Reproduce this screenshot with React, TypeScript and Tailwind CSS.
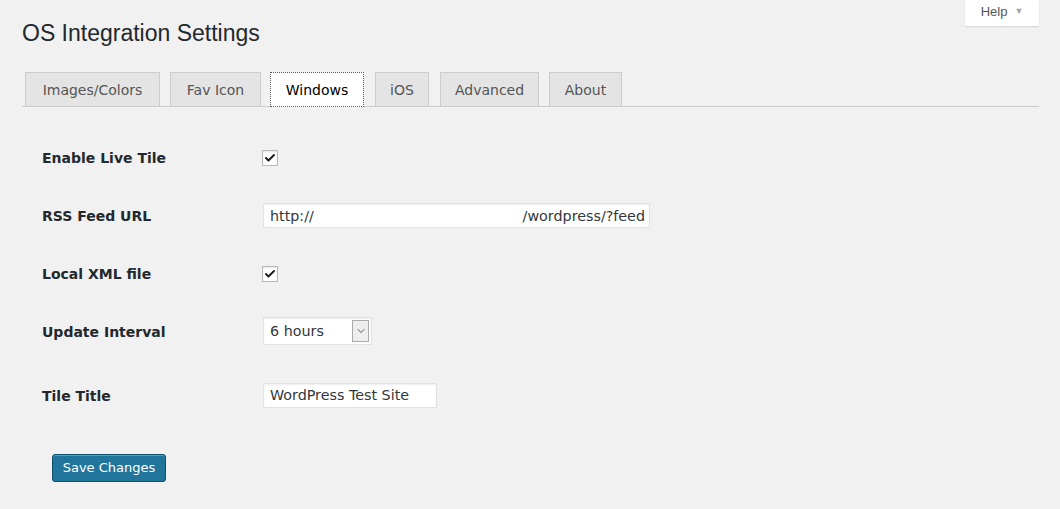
import { Check, ChevronDown } from 'lucide-react';

const tabs = [
  { name: 'Images/Colors', w: 'w-[135px]', ml: 'ml-0' },
  { name: 'Fav Icon', w: 'w-[91px]', ml: 'ml-[10px]' },
  { name: 'Windows', w: 'w-[94px]', ml: 'ml-[9px]' },
  { name: 'iOS', w: 'w-[54px]', ml: 'ml-[11px]' },
  { name: 'Advanced', w: 'w-[99px]', ml: 'ml-[11px]' },
  { name: 'About', w: 'w-[73px]', ml: 'ml-[10px]' },
];

const Checkbox = () => (
  <span className="flex h-4 w-4 items-center justify-center border border-[#b4b9be] bg-white shadow-[inset_0_1px_2px_rgba(0,0,0,0.1)]">
    <Check className="h-3 w-3 text-[#1e1e1e]" strokeWidth={4} />
  </span>
);

export default function App() {
  const row = 'flex items-center';
  const label = 'w-[240px] shrink-0 pl-5 text-[14px] font-bold text-[#23282d]';
  const field =
    'flex items-center bg-white border border-[#e2e2e2] shadow-[inset_0_1px_2px_rgba(0,0,0,0.07)] text-[14.3px] text-[#32373c] px-[6px] pt-[2px]';

  return (
    <div className="relative min-h-[509px] w-[1060px] bg-[#f1f1f1] font-['DejaVu_Sans',Verdana,sans-serif]">
      <div className="absolute right-[21px] top-0 flex h-[26px] w-[74px] items-center justify-center gap-[7px] bg-white pb-[2px] font-['Liberation_Sans',Arial,sans-serif] text-[13px] text-[#555] shadow-[0_1px_1px_rgba(0,0,0,0.1)]">
        <span>Help</span>
        <span className="text-[9px] text-[#a0a5aa]">▼</span>
      </div>

      <div className="pl-[22px] pr-[21px]">
        <h1 className="pt-[19px] font-['Liberation_Sans',Arial,sans-serif] text-[23px] leading-[29px] text-[#23282d]">
          OS Integration Settings
        </h1>

        <div className="mt-[24px] flex border-b border-[#ccc] pl-[3px]">
          {tabs.map((t) =>
            t.name === 'Windows' ? (
              <div
                key={t.name}
                className={`${t.w} ${t.ml} -mb-px flex h-[35px] items-center justify-center border border-dotted border-[#555] bg-white pt-[2px] text-[14px] text-black`}
              >
                {t.name}
              </div>
            ) : (
              <div
                key={t.name}
                className={`${t.w} ${t.ml} flex h-[34px] items-center justify-center border border-b-0 border-[#ccc] bg-[#e4e4e4] pt-[2px] text-[14px] text-[#555]`}
              >
                {t.name}
              </div>
            )
          )}
        </div>

        <div className="mt-[42px] flex flex-col">
          <div className={`${row} h-[18px]`}>
            <div className={label}>Enable Live Tile</div>
            <Checkbox />
          </div>

          <div className={`${row} mt-[40px] h-[18px]`}>
            <div className={label}>RSS Feed URL</div>
            <div className={`${field} -mt-px ml-px h-[25px] w-[387px] justify-between pr-[4px]`}>
              <span>http://</span>
              <span>/wordpress/?feed</span>
            </div>
          </div>

          <div className={`${row} mt-[40px] h-[18px]`}>
            <div className={label}>Local XML file</div>
            <Checkbox />
          </div>

          <div className={`${row} mt-[40px] h-[18px]`}>
            <div className={label}>Update Interval</div>
            <div className={`${field} -mt-[2px] ml-px h-[28px] w-[109px] justify-between pr-[2px]`}>
              <span>6 hours</span>
              <span className="-mt-[2px] flex h-[22px] w-[17px] items-center justify-center border border-[#aaa] bg-[#eee]">
                <ChevronDown className="h-3 w-3 text-[#555]" strokeWidth={2} />
              </span>
            </div>
          </div>

          <div className={`${row} mt-[46px] h-[18px]`}>
            <div className={label}>Tile Title</div>
            <div className={`${field} -mt-[2px] ml-px h-[25px] w-[174px]`}>
              <span>WordPress Test Site</span>
            </div>
          </div>
        </div>

        <div className="mt-[49px] pl-[30px]">
          <button className="h-[28px] w-[114px] rounded-[3px] border border-[#0e4f6e] bg-[#21759b] text-[13px] text-white shadow-[inset_0_1px_0_rgba(120,200,230,0.5)]">
            Save Changes
          </button>
        </div>
      </div>
    </div>
  );
}
